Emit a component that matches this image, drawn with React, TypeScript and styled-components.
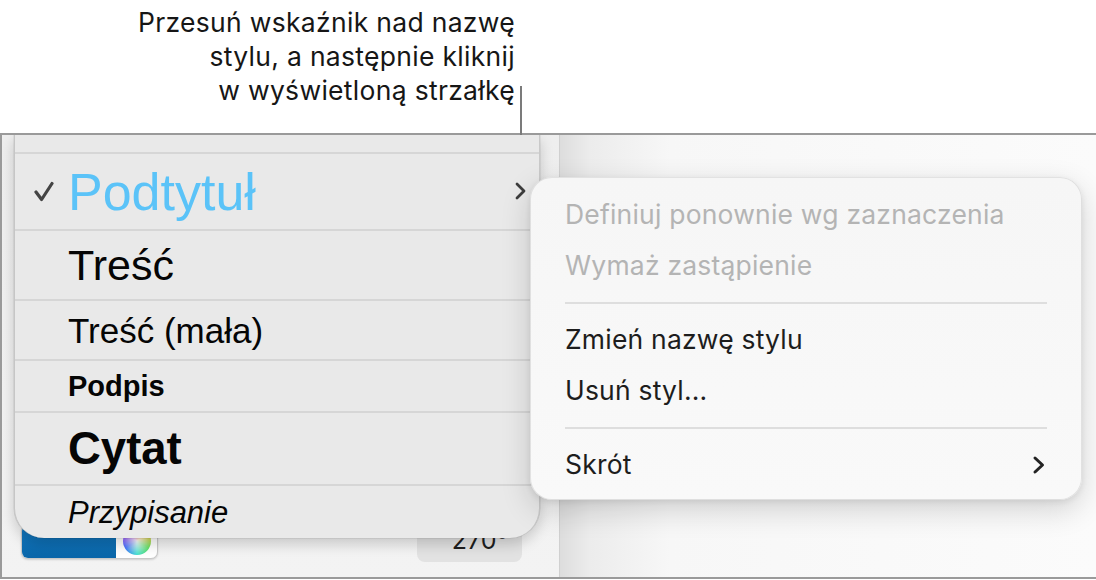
import React from "react";
import styled, { createGlobalStyle } from "styled-components";

const GlobalStyle = createGlobalStyle`
  html, body {
    margin: 0;
    padding: 0;
    background: #ffffff;
  }
  body {
    width: 1096px;
    height: 580px;
    overflow: hidden;
  }
`;

const uiFont = `"Inter", "Noto Sans", "Liberation Sans", sans-serif`;
const docFont = `"Liberation Sans", Arial, sans-serif`;

type StyleEntry = {
  name: string;
  height: number;
  size?: number;
  weight?: number;
  italic?: boolean;
  color?: string;
  checked?: boolean;
  arrow?: boolean;
};

const styles: StyleEntry[] = [
  { name: "", height: 17 },
  { name: "Podtytuł", height: 77, size: 52, color: "#5bc3f8", checked: true, arrow: true },
  { name: "Treść", height: 70, size: 43 },
  { name: "Treść (mała)", height: 60, size: 35 },
  { name: "Podpis", height: 52, size: 29, weight: 700 },
  { name: "Cytat", height: 73, size: 45.5, weight: 700 },
  { name: "Przypisanie", height: 54, size: 31, italic: true },
];

const menu: ({ label: string; disabled?: boolean; submenu?: boolean } | "sep")[] = [
  { label: "Definiuj ponownie wg zaznaczenia", disabled: true },
  { label: "Wymaż zastąpienie", disabled: true },
  "sep",
  { label: "Zmień nazwę stylu" },
  { label: "Usuń styl..." },
  "sep",
  { label: "Skrót", submenu: true },
];

export default function App() {
  return (
    <Page>
      <GlobalStyle />
      <Callout>
        Przesuń wskaźnik nad nazwę
        <br />
        stylu, a następnie kliknij
        <br />w wyświetloną strzałkę
      </Callout>

      <Window>
        <Inspector>
          <StyleList>
            {styles.map((s, i) => (
              <StyleRow key={i} $h={s.height} $first={i === 0}>
                <CheckSlot>
                  {s.checked && (
                    <svg width="20" height="21" viewBox="0 0 20 21">
                      <path
                        d="M2 11 L7.6 18.5 L18 2.5"
                        fill="none"
                        stroke="#444444"
                        strokeWidth="3.2"
                        strokeLinecap="round"
                        strokeLinejoin="round"
                      />
                    </svg>
                  )}
                </CheckSlot>
                <StyleName
                  $size={s.size ?? 20}
                  $weight={s.weight ?? 400}
                  $italic={!!s.italic}
                  $color={s.color ?? "#050505"}
                >
                  {s.name}
                </StyleName>
                {s.arrow && (
                  <RowChevron width="13" height="20" viewBox="0 0 13 20">
                    <path
                      d="M3 3 L10 10 L3 17"
                      fill="none"
                      stroke="#3c3c3c"
                      strokeWidth="2.8"
                      strokeLinecap="round"
                      strokeLinejoin="round"
                    />
                  </RowChevron>
                )}
              </StyleRow>
            ))}
          </StyleList>

          <InspectorFooter>
            <ColorWell>
              <Swatch />
              <WheelSlot>
                <Wheel />
              </WheelSlot>
            </ColorWell>
            <AngleField>270°</AngleField>
          </InspectorFooter>
        </Inspector>

        <Canvas />

        <ContextMenu>
          {menu.map((m, i) =>
            m === "sep" ? (
              <MenuSeparator key={i} />
            ) : (
              <MenuItem key={i} $disabled={!!m.disabled}>
                {m.label}
                {m.submenu && (
                  <SubmenuArrow width="14" height="20" viewBox="0 0 14 20">
                    <path
                      d="M3 3 L10.5 10 L3 17"
                      fill="none"
                      stroke="#232323"
                      strokeWidth="3"
                      strokeLinecap="round"
                      strokeLinejoin="round"
                    />
                  </SubmenuArrow>
                )}
              </MenuItem>
            )
          )}
        </ContextMenu>
      </Window>

      <LeaderLine />
    </Page>
  );
}

const Page = styled.div`
  position: relative;
  width: 1096px;
  height: 580px;
  background: #ffffff;
`;

const Callout = styled.div`
  box-sizing: border-box;
  width: 515px;
  height: 133px;
  padding-top: 5px;
  font-family: ${uiFont};
  font-size: 26.5px;
  letter-spacing: 0.3px;
  line-height: 34px;
  color: #161616;
  text-align: right;
`;

const LeaderLine = styled.div`
  position: absolute;
  left: 520px;
  top: 86px;
  width: 2px;
  height: 94px;
  background: #7b7b7b;
`;

const Window = styled.div`
  position: relative;
  display: flex;
  box-sizing: border-box;
  height: 446px;
  border: 2px solid #9a9a9a;
  border-right: none;
  overflow: hidden;
`;

const Inspector = styled.aside`
  position: relative;
  display: flex;
  flex-direction: column;
  justify-content: flex-end;
  box-sizing: border-box;
  width: 558px;
  padding: 0 0 15px 19px;
  background: linear-gradient(180deg, #eeeeee 0%, #f3f3f3 100%);
  border-right: 1px solid #d0d0d0;
`;

const StyleList = styled.div`
  position: absolute;
  top: 0;
  left: 12px;
  width: 526px;
  box-sizing: border-box;
  background: #e9e9e9;
  border-left: 1px solid #c6c6c6;
  border-right: 1px solid #c9c9c9;
  border-radius: 0 0 30px 30px;
  box-shadow: 0 6px 14px rgba(0, 0, 0, 0.18), 0 0 0 0.5px rgba(0, 0, 0, 0.1);
  overflow: hidden;
  z-index: 2;
`;

const StyleRow = styled.div<{ $h: number; $first: boolean }>`
  display: flex;
  align-items: center;
  box-sizing: border-box;
  height: ${({ $h }) => $h}px;
  padding-right: 12px;
  border-top: ${({ $first }) => ($first ? "none" : "2px solid #d6d6d6")};
`;

const CheckSlot = styled.div`
  display: flex;
  align-items: center;
  width: 53px;
  padding-left: 19px;
  box-sizing: border-box;
`;

const StyleName = styled.span<{
  $size: number;
  $weight: number;
  $italic: boolean;
  $color: string;
}>`
  flex: 1;
  font-family: ${docFont};
  font-size: ${({ $size }) => $size}px;
  font-weight: ${({ $weight }) => $weight};
  font-style: ${({ $italic }) => ($italic ? "italic" : "normal")};
  color: ${({ $color }) => $color};
  line-height: 1;
  white-space: nowrap;
`;

const RowChevron = styled.svg`
  flex: none;
  margin-top: -2px;
`;

const InspectorFooter = styled.div`
  display: flex;
  align-items: center;
  gap: 259px;
  height: 42px;
`;

const ColorWell = styled.div`
  display: flex;
  width: 137px;
  height: 35px;
  box-sizing: border-box;
  border: 1px solid #c8c8c8;
  border-radius: 7px;
  overflow: hidden;
  background: #ffffff;
  box-shadow: 0 1px 2px rgba(0, 0, 0, 0.15);
`;

const Swatch = styled.div`
  width: 94px;
  background: linear-gradient(180deg, #1279c2 0%, #0a66a9 100%);
`;

const WheelSlot = styled.div`
  flex: 1;
  display: flex;
  align-items: center;
  justify-content: center;
`;

const Wheel = styled.div`
  width: 28px;
  height: 28px;
  border-radius: 50%;
  background: radial-gradient(circle, rgba(255, 255, 255, 0.95) 0%, rgba(255, 255, 255, 0) 70%),
    conic-gradient(#ff4040, #ffd040, #60e060, #40e0d0, #4070ff, #c060ff, #ff4040);
`;

const AngleField = styled.div`
  display: flex;
  align-items: flex-end;
  justify-content: flex-end;
  box-sizing: border-box;
  width: 105px;
  height: 42px;
  padding: 0 14px 9px 0;
  border-radius: 8px;
  background: #e2e2e2;
  font-family: ${uiFont};
  font-size: 25px;
  line-height: 1;
  color: #1e1e1e;
`;

const Canvas = styled.main`
  flex: 1;
  background: linear-gradient(90deg, #dddddd 0px, #ececec 30px, #f7f7f7 110px, #fbfbfb 100%);
`;

const ContextMenu = styled.div`
  position: absolute;
  left: 528px;
  top: 42px;
  width: 552px;
  height: 323px;
  box-sizing: border-box;
  padding: 11px 34px;
  border-radius: 22px;
  background: linear-gradient(180deg, #f6f6f6 0%, #f9f9f9 100%);
  border: 1px solid rgba(0, 0, 0, 0.09);
  box-shadow: 0 10px 30px rgba(0, 0, 0, 0.16), 0 2px 6px rgba(0, 0, 0, 0.08);
  font-family: ${uiFont};
  z-index: 3;
`;

const MenuItem = styled.div<{ $disabled: boolean }>`
  display: flex;
  align-items: center;
  justify-content: space-between;
  height: 51px;
  font-size: 26.5px;
  letter-spacing: 0.2px;
  line-height: 51px;
  color: ${({ $disabled }) => ($disabled ? "#b4b4b4" : "#1d1d1d")};
  white-space: nowrap;
`;

const SubmenuArrow = styled.svg`
  flex: none;
  margin-right: 1px;
`;

const MenuSeparator = styled.div`
  height: 2px;
  margin: 11px 0 10px;
  background: #dedede;
`;
